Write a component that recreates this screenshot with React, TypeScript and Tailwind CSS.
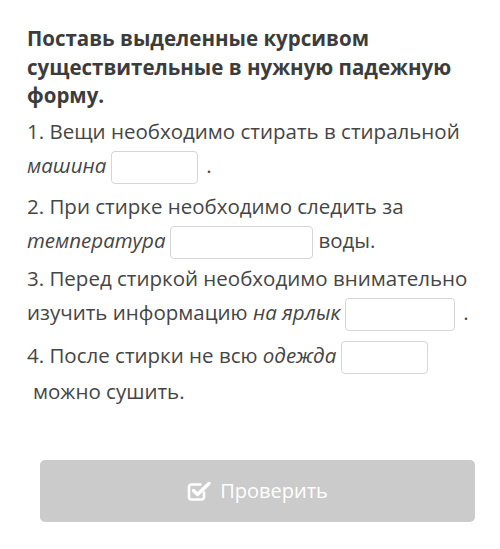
import React from 'react';

function Blank({ w }: { w: string }) {
  return (
    <input
      type="text"
      className={`${w} inline-block h-[33px] align-middle rounded-[4px] border border-[#d6d6d6] bg-white mx-[5px] outline-none`}
    />
  );
}

function CheckSquare() {
  return (
    <svg width="25" height="22" viewBox="0 0 25 22" fill="none" className="inline-block">
      <path d="M17 12.5v4.5a2.5 2.5 0 0 1-2.5 2.5h-10A2.5 2.5 0 0 1 2 17V7a2.5 2.5 0 0 1 2.5-2.5h9" stroke="white" strokeWidth="2.6" strokeLinecap="round" />
      <path d="M6.5 10.5l4 4L22 3.5" stroke="white" strokeWidth="3.4" strokeLinecap="round" strokeLinejoin="round" />
    </svg>
  );
}

export default function App() {
  return (
    <div className="w-[500px] h-[549px] bg-white font-['Open_Sans',sans-serif] text-[#454545]">
      <div className="pl-[27px] pr-[15px] pt-[24px]">
        {/* Task header */}
        <h2 className="text-[20.5px] leading-[28.5px] font-bold text-[#3c3c3c]">
          Поставь выделенные курсивом существительные в нужную падежную форму.
        </h2>

        <div className="mt-[4px] text-[20.5px] leading-[34px]">
          <p className="mb-[5px]">
            1. Вещи необходимо стирать в стиральной <i>машина</i>
            <Blank w="w-[87px]" />
            <span className="ml-[3px]">.</span>
          </p>
          <p className="mb-[2px]">
            2. При стирке необходимо следить за <i>температура</i>
            <Blank w="w-[143px]" />
            воды.
          </p>
          <p className="mb-[7px]">
            3. Перед стиркой необходимо внимательно изучить информацию <i>на ярлык</i>
            <Blank w="w-[110px]" />
            <span className="ml-[3px]">.</span>
          </p>
          <p>
            4. После стирки не всю <i>одежда</i>
            <Blank w="w-[87px]" />
            <br />
            <span className="pl-[6px]">можно сушить.</span>
          </p>
        </div>
      </div>

      <div className="pl-[40px] pr-[25px] mt-[52px]">
        <button className="w-full h-[62px] rounded-[5px] bg-[#cbcbcb] text-white text-[20px] flex items-center justify-center gap-[8px]">
          <CheckSquare />
          Проверить
        </button>
      </div>
    </div>
  );
}
